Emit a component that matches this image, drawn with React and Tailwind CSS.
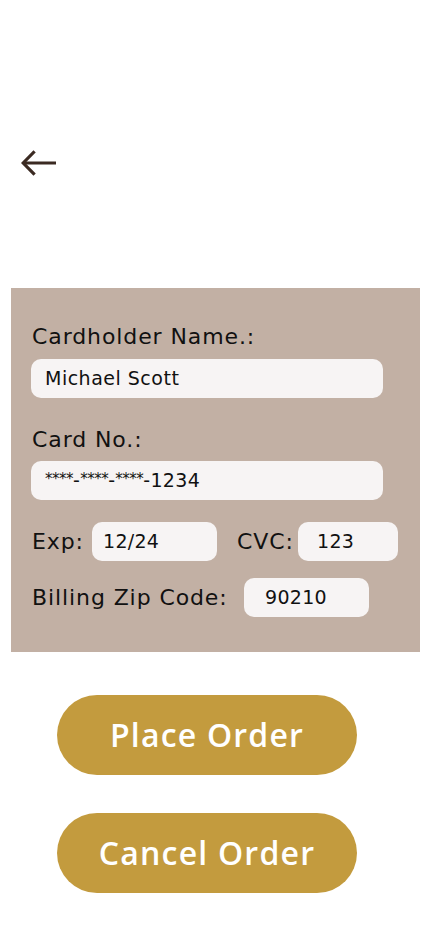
export default function App() {
  const font = { fontFamily: '"DejaVu Sans", "Open Sans", sans-serif' };
  const btnFont = { fontFamily: '"Open Sans", "DejaVu Sans", sans-serif' };
  const Stars = () => <span className="text-[15px] tracking-[-0.5px] align-[3px]">****</span>;
  return (
    <div className="w-[430px] h-[932px] bg-white relative overflow-hidden" style={font}>
      <div className="pt-[150px] pl-[21px]">
        <svg width="36" height="26" viewBox="0 0 36 26" fill="none">
          <path d="M2 13 H35" stroke="#3b2a22" strokeWidth="3.2" />
          <path d="M12.5 2.5 L2.2 13 L12.5 23.5" stroke="#3b2a22" strokeWidth="3.2" strokeLinecap="square" />
        </svg>
      </div>
      <div className="mt-[112px] ml-[11px] w-[409px] h-[364px] bg-[#c2b0a4] pt-[35px] px-[20px] text-[#111]">
        <div className="text-[22px] leading-[28px] pl-[1px] tracking-[0.9px]">Cardholder Name.:</div>
        <div className="mt-[8px] w-[352px] h-[39px] rounded-[10px] bg-[#f7f4f4] flex items-center pl-[14px] text-[19px] tracking-[0.5px]">Michael Scott</div>
        <div className="mt-[28px] text-[22px] leading-[28px] pl-[1px] tracking-[0.9px]">Card No.:</div>
        <div className="mt-[7px] w-[352px] h-[39px] rounded-[10px] bg-[#f7f4f4] flex items-center pl-[14px] text-[19px] tracking-[0.3px]">
          <span><Stars />-<Stars />-<Stars />-1234</span>
        </div>
        <div className="mt-[22px] flex items-center h-[39px]">
          <div className="w-[61px] text-[22px] pl-[1px] tracking-[0.9px]">Exp:</div>
          <div className="w-[125px] h-[39px] rounded-[10px] bg-[#f7f4f4] flex items-center pl-[11px] text-[19px] tracking-[0.3px]">12/24</div>
          <div className="ml-[20px] w-[61px] text-[22px] tracking-[0.9px]">CVC:</div>
          <div className="w-[100px] h-[39px] rounded-[10px] bg-[#f7f4f4] flex items-center pl-[19px] text-[19px] tracking-[0.3px]">123</div>
        </div>
        <div className="mt-[17px] flex items-center h-[39px]">
          <div className="w-[213px] text-[22px] pl-[1px] tracking-[0.9px]">Billing Zip Code:</div>
          <div className="w-[125px] h-[39px] rounded-[10px] bg-[#f7f4f4] flex items-center pl-[21px] text-[19px] tracking-[0.3px]">90210</div>
        </div>
      </div>
      <div className="mt-[43px] flex flex-col items-start gap-[38px] pl-[57px]" style={btnFont}>
        <button className="w-[300px] h-[80px] rounded-full bg-[#c39b3e] text-white text-[32px] font-semibold tracking-[1.2px]">Place Order</button>
        <button className="w-[300px] h-[80px] rounded-full bg-[#c39b3e] text-white text-[32px] font-semibold tracking-[1.2px]">Cancel Order</button>
      </div>
    </div>
  );
}
